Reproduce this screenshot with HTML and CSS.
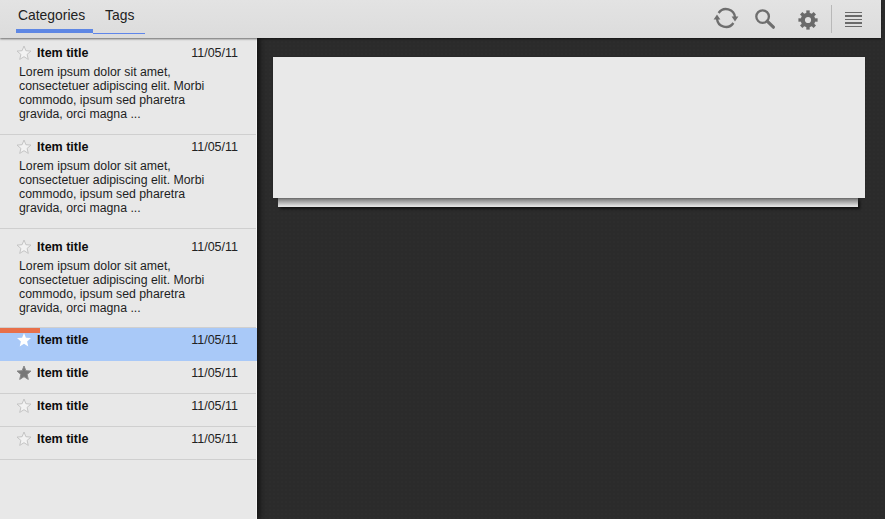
FILE: index.html
```html
<!DOCTYPE html>
<html lang="en">
<head>
<meta charset="utf-8">
<title>Reader</title>
<link rel="stylesheet" href="styles.css">
</head>
<body>
<svg class="defs" width="0" height="0" aria-hidden="true">
  <defs>
    <path id="star" d="M8 1 L9.9 5.7 L15 6.1 L11.1 9.4 L12.3 14.4 L8 11.7 L3.7 14.4 L4.9 9.4 L1 6.1 L6.1 5.7 Z"/>
  </defs>
</svg>
<div class="app">
  <header class="topbar">
    <nav class="tabs">
      <a class="tab tab-active">Categories</a>
      <a class="tab tab-other">Tags</a>
    </nav>
    <div class="tools">
      <svg class="tool tool-sync" width="26" height="26" viewBox="0 0 26 26">
        <path d="M5.6 8 A9 9 0 0 1 22 12.4" fill="none" stroke="#6e6e6e" stroke-width="2.3"/>
        <path d="M20.4 18 A9 9 0 0 1 4 13.6" fill="none" stroke="#6e6e6e" stroke-width="2.3"/>
        <path d="M18.6 11.6 L25.4 11.6 L22 16.6 Z" fill="#6e6e6e"/>
        <path d="M0.6 14.4 L7.4 14.4 L4 9.4 Z" fill="#6e6e6e"/>
      </svg>
      <svg class="tool tool-search" width="22" height="22" viewBox="0 0 22 22">
        <circle cx="8.6" cy="8.6" r="6.3" fill="none" stroke="#6e6e6e" stroke-width="2.3"/>
        <path d="M13.2 13.2 L19.4 19.2" stroke="#6e6e6e" stroke-width="3.2" stroke-linecap="round"/>
      </svg>
      <svg class="tool tool-gear" width="20" height="20" viewBox="0 0 20 20">
        <circle cx="10" cy="10" r="5.2" fill="none" stroke="#6a6a6a" stroke-width="4.2"/>
        <g stroke="#6a6a6a" stroke-width="3.4">
          <path d="M10 0.4 V4"/><path d="M10 16 V19.6"/><path d="M0.4 10 H4"/><path d="M16 10 H19.6"/>
          <path d="M3.2 3.2 L5.8 5.8"/><path d="M14.2 14.2 L16.8 16.8"/><path d="M3.2 16.8 L5.8 14.2"/><path d="M14.2 5.8 L16.8 3.2"/>
        </g>
      </svg>
      <span class="tool-sep"></span>
      <span class="menu-icon"><i></i><i></i><i></i><i></i><i></i></span>
    </div>
  </header>
  <div class="content">
    <aside class="sidebar">
      <article class="item item-open item-first">
        <div class="item-head"><svg class="star" viewBox="0 0 16 16"><use href="#star"/></svg><b class="item-title">Item title</b><time class="item-date">11/05/11</time></div>
        <p class="item-text">Lorem ipsum dolor sit amet,<br>consectetuer adipiscing elit. Morbi<br>commodo, ipsum sed pharetra<br>gravida, orci magna ...</p>
      </article>
      <article class="item item-open item-second">
        <div class="item-head"><svg class="star" viewBox="0 0 16 16"><use href="#star"/></svg><b class="item-title">Item title</b><time class="item-date">11/05/11</time></div>
        <p class="item-text">Lorem ipsum dolor sit amet,<br>consectetuer adipiscing elit. Morbi<br>commodo, ipsum sed pharetra<br>gravida, orci magna ...</p>
      </article>
      <article class="item item-open item-third">
        <div class="item-head"><svg class="star" viewBox="0 0 16 16"><use href="#star"/></svg><b class="item-title">Item title</b><time class="item-date">11/05/11</time></div>
        <p class="item-text">Lorem ipsum dolor sit amet,<br>consectetuer adipiscing elit. Morbi<br>commodo, ipsum sed pharetra<br>gravida, orci magna ...</p>
      </article>
      <article class="item item-selected">
        <span class="progress"></span>
        <div class="item-head"><svg class="star" viewBox="0 0 16 16"><use href="#star"/></svg><b class="item-title">Item title</b><time class="item-date">11/05/11</time></div>
      </article>
      <article class="item item-starred">
        <div class="item-head"><svg class="star" viewBox="0 0 16 16"><use href="#star"/></svg><b class="item-title">Item title</b><time class="item-date">11/05/11</time></div>
      </article>
      <article class="item">
        <div class="item-head"><svg class="star" viewBox="0 0 16 16"><use href="#star"/></svg><b class="item-title">Item title</b><time class="item-date">11/05/11</time></div>
      </article>
      <article class="item">
        <div class="item-head"><svg class="star" viewBox="0 0 16 16"><use href="#star"/></svg><b class="item-title">Item title</b><time class="item-date">11/05/11</time></div>
      </article>
    </aside>
    <main class="reader">
      <section class="card"></section>
      <div class="card-under"></div>
    </main>
  </div>
</div>
</body>
</html>
```
FILE: styles.css
```css
html, body {
  margin: 0;
  height: 100%;
  overflow: hidden;
  background: #2b2b2b;
}
body {
  font-family: "Liberation Sans", Arial, sans-serif;
  color: #111;
}
.defs { position: absolute; }
.app {
  height: 519px;
  display: flex;
  flex-direction: column;
  background-color: #2b2b2b;
  background-image: radial-gradient(rgba(255,255,255,.012) 1px, transparent 1px);
  background-size: 4px 4px;
}
.topbar {
  width: 881px;
  height: 38px;
  flex: none;
  display: flex;
  justify-content: space-between;
  background: linear-gradient(#e3e3e3, #dcdcdc);
  position: relative;
  z-index: 2;
  box-shadow: 0 1px 2px rgba(0,0,0,.55);
}
.tabs {
  display: flex;
  align-items: flex-start;
  margin-left: 16px;
  height: 35px;
}
.tab {
  font-size: 13.9px;
  line-height: 17px;
  padding-top: 7px;
  color: #222;
}
.tab-active {
  width: 75px;
  padding-left: 2px;
  border-bottom: 4px solid #5e87e4;
  height: 22px;
}
.tab-other {
  width: 40px;
  padding-left: 12px;
  border-bottom: 1px solid #5f86ea;
  height: 26px;
}
.tools {
  display: flex;
  align-items: center;
  height: 38px;
}
.tool { display: block; flex: none; }
.tool-sync { margin-right: 15px; margin-top: -2px; }
.tool-search { margin-right: 22px; margin-top: -1px; }
.tool-gear { margin-right: 13px; margin-top: 1px; }
.tool-sep {
  width: 1px;
  height: 28px;
  background: #b8b8b8;
  margin-right: 13px;
}
.menu-icon {
  width: 17px;
  margin-right: 19px;
  margin-top: 1px;
  display: flex;
  flex-direction: column;
  gap: 2.2px;
}
.menu-icon i {
  display: block;
  height: 1.4px;
  background: #6a6a6a;
}
.content {
  flex: 1;
  display: flex;
  min-height: 0;
}
.sidebar {
  width: 256px;
  flex: none;
  background: #e8e8e8;
  border-right: 1px solid #f3f3f3;
  box-shadow: 3px 0 5px rgba(0,0,0,.55);
  position: relative;
  z-index: 1;
}
.item {
  position: relative;
  height: 33px;
  box-sizing: border-box;
  border-bottom: 1px solid #cfcfcf;
  padding: 4px 18px 0 16px;
}
.item-open { padding-top: 7px; }
.item-first { height: 97px; }
.item-second { height: 94px; padding-top: 4px; }
.item-third { height: 99px; padding-top: 10px; }
.item-selected {
  background: #a9c9f8;
  border-bottom: 0;
  margin-right: -1px;
  padding-right: 19px;
}
.progress {
  position: absolute;
  left: 0;
  top: 0;
  width: 40px;
  height: 5px;
  background: #e8704a;
}
.item-head {
  display: flex;
  align-items: center;
  height: 16px;
}
.star {
  width: 16px;
  height: 16px;
  flex: none;
  margin-right: 5px;
  margin-top: -1px;
  fill: #f2f2f2;
  stroke: #c4c4c4;
  stroke-width: 1;
}
.item-selected .star { fill: #fff; stroke: none; }
.item-starred .star { fill: #777; stroke: #888; }
.item-title {
  font-size: 12.5px;
  font-weight: 700;
  line-height: 16px;
  color: #0c0c0c;
}
.item-date {
  margin-left: auto;
  font-size: 12.5px;
  line-height: 16px;
  color: #222;
}
.item-text {
  margin: 4px 0 0 3px;
  font-size: 12.3px;
  line-height: 14px;
  color: #1e1e1e;
}
.reader {
  flex: 1;
  padding: 19px 20px 0 16px;
  min-width: 0;
}
.card {
  height: 141px;
  background: #e9e9e9;
  position: relative;
  z-index: 1;
  box-shadow: 0 0 1px rgba(0,0,0,.3);
}
.card-under {
  height: 9px;
  margin: 0 7px 0 5px;
  background: linear-gradient(#707070, #a0a0a0 35%, #dcdcdc 85%, #e4e4e4);
  box-shadow: 2px 2px 3px rgba(0,0,0,.6);
}
```
